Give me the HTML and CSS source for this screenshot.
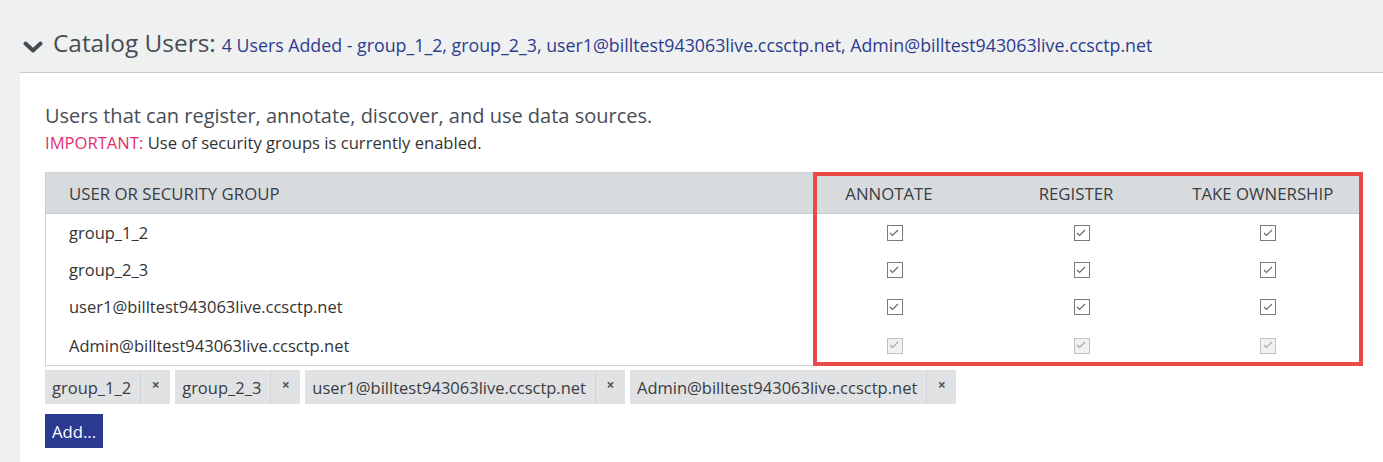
FILE: index.html
```html
<!DOCTYPE html>
<html lang="en">
<head>
<meta charset="utf-8">
<title>Catalog Users</title>
<link rel="stylesheet" href="styles.css">
</head>
<body>
<div class="page">
  <div class="section-head">
    <svg class="chevron" width="20" height="14" viewBox="0 0 20 14" aria-hidden="true">
      <path d="M2.5 3.5 L10 10.5 L17.5 3.5" fill="none" stroke="#464c54" stroke-width="4" stroke-linecap="round" stroke-linejoin="round"/>
    </svg>
    <span class="title">Catalog Users:</span>
    <span class="summary">4 Users Added - group_1_2, group_2_3, user1@billtest943063live.ccsctp.net, Admin@billtest943063live.ccsctp.net</span>
  </div>
  <div class="panel">
    <p class="lead">Users that can register, annotate, discover, and use data sources.</p>
    <p class="note"><span class="important">IMPORTANT:</span> Use of security groups is currently enabled.</p>
    <div class="table-wrap">
      <table class="perm">
        <colgroup>
          <col class="c-name">
          <col class="c-perm">
          <col class="c-perm">
          <col class="c-perm">
        </colgroup>
        <thead>
          <tr>
            <th class="name">USER OR SECURITY GROUP</th>
            <th>ANNOTATE</th>
            <th>REGISTER</th>
            <th>TAKE OWNERSHIP</th>
          </tr>
        </thead>
        <tbody>
          <tr><td class="name">group_1_2</td>
            <td><span class="cb"><svg viewBox="0 0 16 16"><polyline points="4,8 6.5,10.5 12,5"/></svg></span></td>
            <td><span class="cb"><svg viewBox="0 0 16 16"><polyline points="4,8 6.5,10.5 12,5"/></svg></span></td>
            <td><span class="cb"><svg viewBox="0 0 16 16"><polyline points="4,8 6.5,10.5 12,5"/></svg></span></td></tr>
          <tr><td class="name">group_2_3</td>
            <td><span class="cb"><svg viewBox="0 0 16 16"><polyline points="4,8 6.5,10.5 12,5"/></svg></span></td>
            <td><span class="cb"><svg viewBox="0 0 16 16"><polyline points="4,8 6.5,10.5 12,5"/></svg></span></td>
            <td><span class="cb"><svg viewBox="0 0 16 16"><polyline points="4,8 6.5,10.5 12,5"/></svg></span></td></tr>
          <tr><td class="name">user1@billtest943063live.ccsctp.net</td>
            <td><span class="cb"><svg viewBox="0 0 16 16"><polyline points="4,8 6.5,10.5 12,5"/></svg></span></td>
            <td><span class="cb"><svg viewBox="0 0 16 16"><polyline points="4,8 6.5,10.5 12,5"/></svg></span></td>
            <td><span class="cb"><svg viewBox="0 0 16 16"><polyline points="4,8 6.5,10.5 12,5"/></svg></span></td></tr>
          <tr class="last"><td class="name">Admin@billtest943063live.ccsctp.net</td>
            <td><span class="cb dis"><svg viewBox="0 0 16 16"><polyline points="4,8 6.5,10.5 12,5"/></svg></span></td>
            <td><span class="cb dis"><svg viewBox="0 0 16 16"><polyline points="4,8 6.5,10.5 12,5"/></svg></span></td>
            <td><span class="cb dis"><svg viewBox="0 0 16 16"><polyline points="4,8 6.5,10.5 12,5"/></svg></span></td></tr>
        </tbody>
      </table>
      <div class="highlight"></div>
    </div>
    <div class="chips">
      <span class="chip"><span class="chip-text">group_1_2</span><span class="chip-x">×</span></span>
      <span class="chip"><span class="chip-text">group_2_3</span><span class="chip-x">×</span></span>
      <span class="chip"><span class="chip-text">user1@billtest943063live.ccsctp.net</span><span class="chip-x">×</span></span>
      <span class="chip"><span class="chip-text">Admin@billtest943063live.ccsctp.net</span><span class="chip-x">×</span></span>
    </div>
    <button class="add">Add...</button>
  </div>
</div>
</body>
</html>
```
FILE: styles.css
```css
html, body {
  margin: 0;
  padding: 0;
  background: #eff0f0;
  font-family: "Open Sans", "Noto Sans", "Liberation Sans", sans-serif;
  color: #333;
}
.page {
  width: 1383px;
  height: 462px;
  overflow: hidden;
}
.section-head {
  display: flex;
  align-items: baseline;
  padding: 27px 0 0 23px;
  height: 45px;
}
.chevron {
  align-self: center;
  margin-right: 10px;
  margin-bottom: 5px;
}
.title {
  font-size: 24.4px;
  line-height: 32px;
  color: #474d55;
  margin-right: 6px;
}
.summary {
  font-size: 17.8px;
  color: #2d3c8e;
}
.panel {
  margin-left: 20px;
  background: #fff;
  border-top: 1px solid #c6c8cc;
  padding: 29px 23px 0 25px;
  height: 400px;
}
.lead {
  margin: 0;
  font-size: 20px;
  color: #474d55;
  line-height: 28px;
}
.note {
  margin: 0;
  font-size: 16.6px;
  color: #333;
  line-height: 25px;
}
.important {
  color: #e2306e;
}
.table-wrap {
  position: relative;
  margin-top: 17px;
}
.perm {
  width: 1315px;
  border-collapse: collapse;
  border: 1px solid #cfd1d4;
  table-layout: fixed;
}
.c-name { width: 754px; }
.c-perm { width: 187px; }
.perm th {
  background: #d8dbde;
  font-weight: normal;
  font-size: 16.8px;
  color: #3a3d42;
  height: 40px;
  padding: 0 8px 0 0;
  text-align: center;
  border-bottom: 1px solid #c9cbce;
}
.perm th.name {
  text-align: left;
  padding-left: 23px;
}
.perm td {
  height: 37px;
  padding: 0 0 0 3px;
  text-align: center;
  font-size: 16.5px;
  color: #333;
}
.perm tr.last td {
  height: 40px;
}
.perm td.name {
  text-align: left;
  padding-left: 23px;
}
.cb {
  display: inline-block;
  width: 16px;
  height: 16px;
  box-sizing: border-box;
  border: 1.5px solid #7a7a7a;
  background: #fff;
  vertical-align: middle;
  margin-top: -3px;
}
.cb svg {
  display: block;
  width: 16px;
  height: 16px;
  margin: -1.5px;
  fill: none;
  stroke: #666;
  stroke-width: 1.1;
}
.cb.dis {
  border-color: #c2c2c2;
  background: #f1f1f1;
}
.cb.dis svg {
  stroke: #a8a8a8;
}
.highlight {
  position: absolute;
  left: 768px;
  top: 0;
  width: 550px;
  height: 194px;
  box-sizing: border-box;
  border: 4px solid #e84a47;
  pointer-events: none;
}
.chips {
  display: flex;
  gap: 5px;
  margin-top: 4px;
}
.chip {
  display: flex;
  align-items: stretch;
  background: #e1e2e4;
  height: 34px;
  font-size: 16.5px;
  color: #3a3d42;
}
.chip-text {
  padding: 1px 9px 0 7px;
  display: flex;
  align-items: center;
}
.chip-x {
  width: 29px;
  border-left: 1px solid #d2d3d6;
  text-align: center;
  font-size: 14px;
  line-height: 30px;
  color: #555;
  font-weight: bold;
}
.add {
  margin-top: 10px;
  display: block;
  background: #2b3990;
  color: #fff;
  border: 0;
  font-family: inherit;
  font-size: 16.7px;
  height: 34px;
  padding: 0 7px;
}
```
